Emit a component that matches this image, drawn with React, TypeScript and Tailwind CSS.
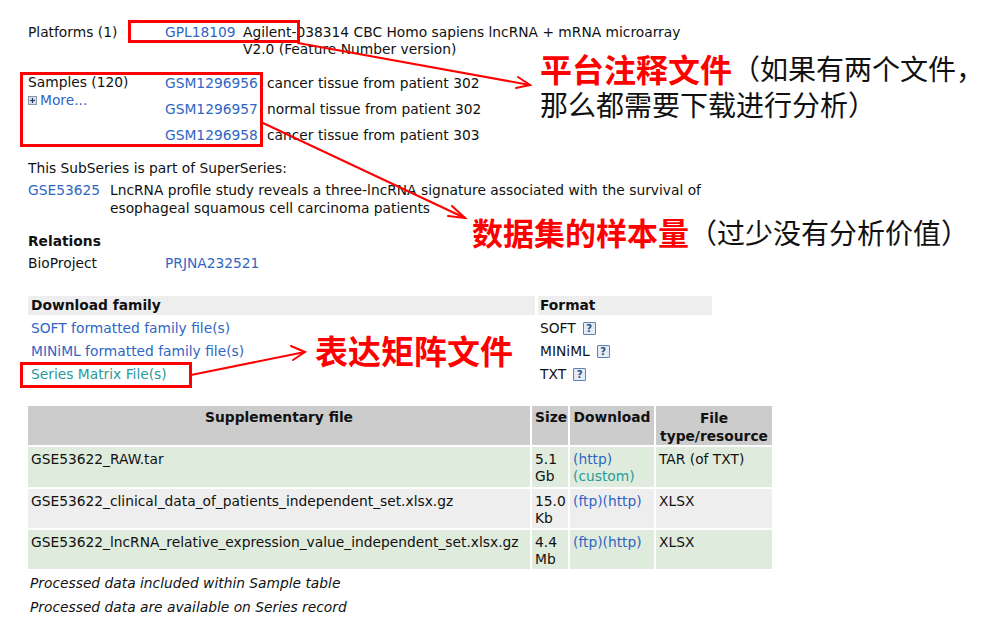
import type { ReactNode } from "react";

const link = "text-[#2f66c4]";
const visited = "text-[#2a9a9a]";

function Help() {
  return (
    <span className="ml-[7px] inline-flex h-[13px] w-[13px] items-center justify-center rounded-[1px] border border-[#5f82b0] bg-[#e3ebf4] text-[10px] font-bold leading-none text-[#2d4f80]">
      ?
    </span>
  );
}

function PlusBox() {
  return (
    <svg width="9" height="9" viewBox="0 0 9 9" className="mr-[3px]">
      <rect x="0.5" y="0.5" width="8" height="8" fill="#d8dde6" stroke="#8a94a3" />
      <path d="M2 4.5h5M4.5 2v5" stroke="#1f3a66" strokeWidth="1.2" />
    </svg>
  );
}

function Cell({ className = "", children }: { className?: string; children?: ReactNode }) {
  return <div className={`px-[3px] ${className}`}>{children}</div>;
}

const samples = [
  ["GSM1296956", "cancer tissue from patient 302"],
  ["GSM1296957", "normal tissue from patient 302"],
  ["GSM1296958", "cancer tissue from patient 303"],
];

const supp = [
  {
    name: "GSE53622_RAW.tar",
    size: ["5.1", "Gb"],
    dl: (
      <>
        <span className={link}>(http)</span>
        <br />
        <span className={visited}>(custom)</span>
      </>
    ),
    type: "TAR (of TXT)",
    bg: "bg-[#dfebdc]",
    h: "h-[40px]",
  },
  {
    name: "GSE53622_clinical_data_of_patients_independent_set.xlsx.gz",
    size: ["15.0", "Kb"],
    dl: <span className={link}>(ftp)(http)</span>,
    type: "XLSX",
    bg: "bg-[#eeeeee]",
    h: "h-[39px]",
  },
  {
    name: "GSE53622_lncRNA_relative_expression_value_independent_set.xlsx.gz",
    size: ["4.4", "Mb"],
    dl: <span className={link}>(ftp)(http)</span>,
    type: "XLSX",
    bg: "bg-[#dfebdc]",
    h: "h-[39px]",
  },
];

export default function App() {
  return (
    <div className="relative h-[621px] w-[992px] overflow-hidden bg-white font-['DejaVu_Sans',Verdana,sans-serif] text-[13.8px] leading-[17px] text-[#111]">
      <div className="pl-[28px] pt-[24px]">
        {/* platforms */}
        <div className="flex">
          <div className="w-[137px]">Platforms (1)</div>
          <div className={`w-[78px] ${link}`}>GPL18109</div>
          <div className="whitespace-nowrap">
            Agilent-038314 CBC Homo sapiens lncRNA + mRNA microarray
            <br />
            V2.0 (Feature Number version)
          </div>
        </div>

        {/* samples */}
        <div className="mt-[12px] flex">
          <div className="w-[137px] pt-[4px]">
            <div>Samples (120)</div>
            <div className={`mt-[1px] flex items-center ${link}`}>
              <PlusBox />
              More...
            </div>
          </div>
          <div>
            {samples.map(([id, d]) => (
              <div key={id} className="flex h-[26px] items-center">
                <div className={`w-[102px] ${link}`}>{id}</div>
                <div>{d}</div>
              </div>
            ))}
          </div>
        </div>

        <div className="mt-[12px]">This SubSeries is part of SuperSeries:</div>
        <div className="mt-[4px] flex leading-[18px]">
          <div className={`w-[82px] ${link}`}>GSE53625</div>
          <div className="whitespace-nowrap">
            LncRNA profile study reveals a three-lncRNA signature associated with the survival of
            <br />
            esophageal squamous cell carcinoma patients
          </div>
        </div>

        <div className="mt-[16px] font-bold">Relations</div>
        <div className="mt-[5px] flex">
          <div className="w-[137px]">BioProject</div>
          <div className={link}>PRJNA232521</div>
        </div>

        {/* download family */}
        <div className="mt-[24px] flex gap-[3px]">
          <div className="w-[507px]">
            <div className="flex h-[19px] items-center bg-[#eeeeee] px-[3px] font-bold">Download family</div>
            <div className="mt-[2px] flex h-[23px] items-center px-[3px] text-[#2f66c4]">SOFT formatted family file(s)</div>
            <div className="flex h-[23px] items-center px-[3px] text-[#2f66c4]">MINiML formatted family file(s)</div>
            <div className="flex h-[23px] items-center px-[3px] text-[#2a9a9a]">Series Matrix File(s)</div>
          </div>
          <div className="w-[174px]">
            <div className="flex h-[19px] items-center bg-[#eeeeee] px-[2px] font-bold">Format</div>
            <div className="mt-[2px] flex h-[23px] items-center px-[2px]">
              SOFT <Help />
            </div>
            <div className="flex h-[23px] items-center px-[2px]">
              MINiML <Help />
            </div>
            <div className="flex h-[23px] items-center px-[2px]">
              TXT <Help />
            </div>
          </div>
        </div>

        {/* supplementary */}
        <div className="mt-[20px] grid w-[744px] grid-cols-[502px_36px_84px_116px] gap-[2px]">
          <Cell className="h-[39px] bg-[#cccccc] pt-[3px] text-center font-bold">Supplementary file</Cell>
          <Cell className="h-[39px] bg-[#cccccc] px-[1px] pt-[3px] text-center font-bold">Size</Cell>
          <Cell className="h-[39px] bg-[#cccccc] px-[1px] pt-[3px] text-center font-bold">Download</Cell>
          <Cell className="h-[39px] bg-[#cccccc] pt-[3px] text-center font-bold leading-[18px]">
            File
            <br />
            type/resource
          </Cell>
          {supp.map((r) => (
            <div key={r.name} className="contents">
              <Cell className={`${r.h} ${r.bg} whitespace-nowrap pt-[4px]`}>{r.name}</Cell>
              <Cell className={`${r.h} ${r.bg} px-[1px] pt-[4px]`}>
                {r.size[0]}
                <br />
                {r.size[1]}
              </Cell>
              <Cell className={`${r.h} ${r.bg} pt-[4px]`}>{r.dl}</Cell>
              <Cell className={`${r.h} ${r.bg} pt-[4px]`}>{r.type}</Cell>
            </div>
          ))}
        </div>

        <div className="mt-[2px] flex h-[24px] items-center px-[2px] italic">Processed data included within Sample table</div>
        <div className="flex h-[24px] items-center px-[2px] italic">Processed data are available on Series record</div>
      </div>

      {/* annotation overlays */}
      <div className="absolute left-[128px] top-[20px] h-[23px] w-[172px] border-[3px] border-[#ff0000]" />
      <div className="absolute left-[20px] top-[72px] h-[75px] w-[243px] border-[3px] border-[#ff0000]" />
      <div className="absolute left-[20px] top-[362px] h-[26px] w-[172px] border-[3px] border-[#ff0000]" />

      <svg className="pointer-events-none absolute left-0 top-0" width="992" height="621">
        <g stroke="#ff0000" strokeWidth="2" fill="none" strokeLinecap="round">
          <path d="M298 43 L530 85" />
          <path d="M518 77 L530 85 L516 88" />
          <path d="M263 123 L465 218" />
          <path d="M452 206 L465 218 L448 216" />
          <path d="M191 375 L305 352" />
          <path d="M291 346 L305 352 L293 360" />
        </g>
      </svg>

      <div className="absolute left-[540px] top-[51px] flex flex-col gap-[2px] font-['Noto_Sans_CJK_SC',sans-serif]">
        <div className="flex items-center whitespace-nowrap">
          <span className="text-[32px] font-bold leading-[34px] text-[#ff0000]">平台注释文件</span>
          <span className="text-[28px] leading-[34px] text-[#111]">（如果有两个文件，</span>
        </div>
        <div className="whitespace-nowrap text-[28px] leading-[34px] text-[#111]">那么都需要下载进行分析）</div>
      </div>

      <div className="absolute left-[472px] top-[215px] flex items-center whitespace-nowrap font-['Noto_Sans_CJK_SC',sans-serif]">
        <span className="text-[31px] font-bold leading-[34px] text-[#ff0000]">数据集的样本量</span>
        <span className="text-[28px] leading-[34px] text-[#111]">（过少没有分析价值）</span>
      </div>

      <div className="absolute left-[315px] top-[333px] flex items-center whitespace-nowrap font-['Noto_Sans_CJK_SC',sans-serif]">
        <span className="text-[33px] font-bold leading-[34px] text-[#ff0000]">表达矩阵文件</span>
      </div>
    </div>
  );
}
